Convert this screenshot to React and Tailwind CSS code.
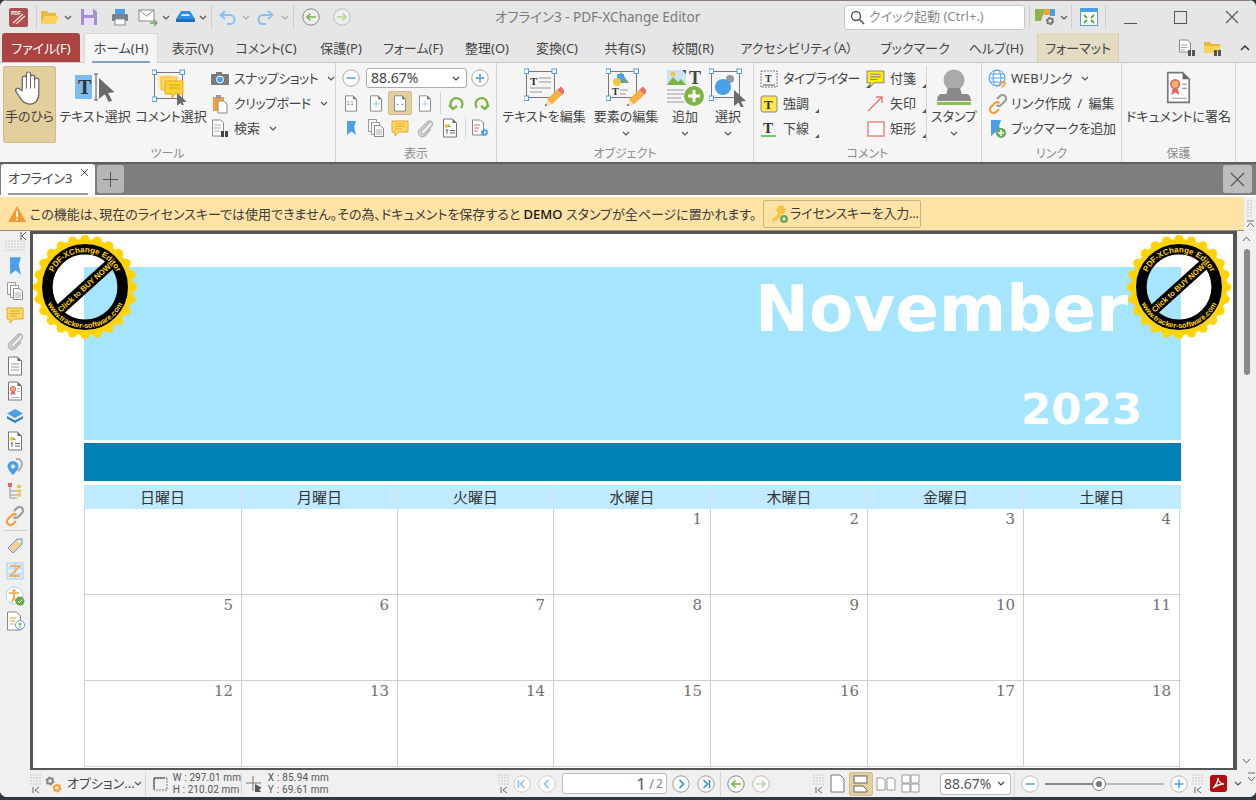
import React from "react";

const Svg = ({ w = 18, h = 18, vb, children, className = "" }) => (
  <svg width={w} height={h} viewBox={vb || `0 0 ${w} ${h}`} className={"shrink-0 " + className} fill="none">{children}</svg>
);
const Chev = ({ c = "#555", className = "" }) => (
  <Svg w={8} h={5} className={className}><path d="M1 1l3 3 3-3" stroke={c} strokeWidth="1.2" /></Svg>
);
const Corner = () => <Svg w={4} h={4} className="self-end mb-[3px] ml-[1px]"><path d="M4 0v4H0z" fill="#555" /></Svg>;
const Doc = ({ w = 16, h = 20, children }) => (
  <Svg w={w} h={h} vb="0 0 16 20">
    <path d="M1.5 1h9l4 4v14h-13z" fill="#fff" stroke="#777" />
    <path d="M10.5 1v4h4z" fill="#666" />
    {children}
  </Svg>
);
const Lines = ({ x = 4, y = 8, n = 3, w = 8, c = "#999" }) => (
  <>{Array.from({ length: n }).map((_, i) => <path key={i} d={`M${x} ${y + i * 3}h${w}`} stroke={c} />)}</>
);
const Circle = ({ c = "#4a9fe8", kind = "plus", ring = "#a8a8a8", fill = "#fff" }) => (
  <Svg w={18} h={18} vb="0 0 18 18">
    <circle cx="9" cy="9" r="8.2" fill={fill} stroke={ring} />
    {kind === "plus" && <path d="M4.5 9h9M9 4.5v9" stroke={c} strokeWidth="1.5" />}
    {kind === "minus" && <path d="M4.5 9h9" stroke={c} strokeWidth="1.5" />}
    {kind === "left" && <path d="M10.5 5l-4 4 4 4" stroke={c} strokeWidth="1.6" />}
    {kind === "right" && <path d="M7.5 5l4 4-4 4" stroke={c} strokeWidth="1.6" />}
    {kind === "first" && <path d="M11.5 5l-4 4 4 4M5.5 5v8" stroke={c} strokeWidth="1.6" />}
    {kind === "last" && <path d="M6.5 5l4 4-4 4M12.5 5v8" stroke={c} strokeWidth="1.6" />}
    {kind === "back" && <path d="M14 9H5M8.5 5.5L5 9l3.5 3.5" stroke={c} strokeWidth="1.6" />}
    {kind === "fwd" && <path d="M4 9h9M9.5 5.5L13 9l-3.5 3.5" stroke={c} strokeWidth="1.6" />}
  </Svg>
);
const Grip = ({ arrow = true }) => (
  <div className="flex flex-col items-center w-[12px] shrink-0">
    <Svg w={12} h={12}>
      {Array.from({ length: 16 }).map((_, i) => (
        <rect key={i} x={(i % 4) * 3} y={Math.floor(i / 4) * 3} width="2" height="2" fill="#dcdcdc" />
      ))}
    </Svg>
    {arrow && <Svg w={8} h={8}><path d="M1 1v6M7 1L3 4l4 3" stroke="#666" /></Svg>}
  </div>
);
const DotGrid = ({ cols, rows }) => (
  <Svg w={cols * 3} h={rows * 3}>
    {Array.from({ length: cols * rows }).map((_, i) => (
      <rect key={i} x={(i % cols) * 3} y={Math.floor(i / cols) * 3} width="2" height="2" fill="#dcdcdc" />
    ))}
  </Svg>
);
const Bookmark = ({ w = 12, h = 18 }) => (
  <Svg w={w} h={h} vb="0 0 12 18"><path d="M1 1h10l-2 7 2 9-5-4-5 4z" fill="#4a9fe8" /></Svg>
);
const Pages = () => (
  <Svg w={18} h={20}>
    <path d="M1.5 1.5h8v12h-8z" fill="#fff" stroke="#999" /><path d="M4.5 4.5h8v12h-8z" fill="#fff" stroke="#999" />
    <path d="M7.5 7.5h6l3 3v8h-9z" fill="#fff" stroke="#888" /><path d="M9 12h6M9 14h6M9 16h6" stroke="#aaa" />
  </Svg>
);
const Note = ({ c = "#ffd966", s = "#e0a92e", w = 18, h = 17 }) => (
  <Svg w={w} h={h} vb="0 0 18 17">
    <path d="M1 1h16v11H8l-4 4v-4H1z" fill={c} stroke={s} />
    <path d="M4 4h10M4 6.5h10M4 9h7" stroke={s} />
  </Svg>
);
const Clip = () => (
  <Svg w={18} h={20}><path d="M14 4L5.5 13c-2 2.2 1 4.5 3 2.5l7-7.5c3-3.2-1.5-6.5-4-4L3.5 12c-3.5 4 2 9 6 5l5.5-6" stroke="#b5b5b5" strokeWidth="1.5" /></Svg>
);
const DocImg = () => (
  <Doc><path d="M4 9l2.5-3L9 9z" fill="#7cb342" /><circle cx="4.5" cy="8" r="2" fill="#f6c343" /><path d="M3.5 12h3M5 12v4M8 12.5h5M8 15h5" stroke="#666" /></Doc>
);
const Cert = ({ big }) => (
  <Doc w={big ? 27 : 16} h={big ? 33 : 20}>
    <circle cx="6" cy="8" r="2.6" fill="#f6b26b" stroke="#e06666" />
    <path d="M4.5 10.5l-1 4 2.5-1.5 2.5 1.5-1-4" fill="#e06666" />
    <path d="M10 8h3M10 10.5h3M4 16.5h9" stroke="#999" strokeWidth=".7" />
  </Doc>
);
const LinkIcon = ({ w = 20, h = 20, a = "#f5a033", b = "#9a9a9a" }) => (
  <Svg w={w} h={h} vb="0 0 20 20">
    <path d="M9 5l3-3a3.5 3.5 0 015 5l-4 4a3.5 3.5 0 01-4.5 0" stroke={b} strokeWidth="2.2" />
    <path d="M11 15l-3 3a3.5 3.5 0 01-5-5l4-4a3.5 3.5 0 014.5 0" stroke={a} strokeWidth="2.2" />
  </Svg>
);
const Arrow = ({ x = 0, y = 0, s = 1 }) => (
  <path transform={`translate(${x} ${y}) scale(${s})`} d="M0 0l12 11-5 .5 3 6-2.5 1-3-6L0 16z" fill="#6a6a6a" />
);
const Pencil = ({ x, y }) => (
  <g transform={`translate(${x} ${y}) rotate(47)`}>
    <rect x="-3.5" y="-25" width="7" height="5" fill="#e57368" />
    <rect x="-3.5" y="-20" width="7" height="14" fill="#f6b042" />
    <path d="M-3.5 -6h7L0 0z" fill="#f4dfb8" />
    <path d="M-1.2 -2h2.400L0 0z" fill="#444" />
  </g>
);
const Handle = ({ x, y }) => <rect x={x - 2} y={y - 2} width="4.5" height="4.5" fill="#fff" stroke="#4a9fe8" />;

const cog = (cx, cy, r, c) => (
  <g>
    <circle cx={cx} cy={cy} r={r} fill="none" stroke={c} strokeWidth={r * 0.7} />
    <circle cx={cx} cy={cy} r={r * 1.35} fill="none" stroke={c} strokeWidth={r * 0.5} strokeDasharray={`${r * 0.7} ${r * 0.7}`} />
  </g>
);

const Large = ({ icon, label, chev, w, h = "h-[42px]" }) => (
  <div className={`flex flex-col items-center shrink-0 ${w}`}>
    <div className={`flex items-center justify-center ${h}`}>{icon}</div>
    <div className="leading-[18px] whitespace-nowrap -mt-[1px]">{label}</div>
    {chev && <Chev className="mt-[6px]" />}
  </div>
);
const Row = ({ icon, label, chev, corner, gap = "gap-[5px]", iw = "w-[19px]", track = "" }) => (
  <div className={`flex items-center h-[25px] whitespace-nowrap ${gap}`}>
    <div className={`flex justify-center shrink-0 ${iw}`}>{icon}</div>
    <span className={track}>{label}</span>
    {chev && <Chev className="ml-[4px]" />}
    {corner && <Corner />}
  </div>
);
const Group = ({ w, label, children }) => (
  <div className={`flex flex-col shrink-0 h-full border-r border-[#d4d4d4] ${w}`}>
    <div className="h-[79px] flex">{children}</div>
    <div className="h-[20px] leading-[24px] text-center text-[12px] text-[#8c8c8c]">{label}</div>
  </div>
);

const teeth = Array.from({ length: 24 }).map((_, i) => {
  const a = (i / 24) * Math.PI * 2;
  return [52 + Math.cos(a) * 47.5, 52 + Math.sin(a) * 47.5];
});
const Stamp = ({ id, className }) => (
  <svg width="104" height="104" viewBox="0 0 104 104" className={"absolute " + className} fill="none">
    <defs>
      <path id={id + "t"} d="M24.500 74A35 35 0 1 1 79.500 74" />
      <path id={id + "b"} d="M12 42A41.200 41.200 0 1 0 92 42" />
    </defs>
    {teeth.map(([x, y], i) => <circle key={i} cx={x} cy={y} r="4.600" fill="#ffd400" />)}
    <circle cx="52" cy="52" r="45.500" stroke="#ffd400" strokeWidth="5" />
    <circle cx="52" cy="52" r="37.700" stroke="#000" strokeWidth="10.600" />
    <g transform="rotate(-42 52 52)">
      <rect x="19" y="46.500" width="66" height="11" fill="#000" />
      <text x="52" y="54.800" textAnchor="middle" fontSize="7.800" fontWeight="700" fill="#ffd400" fontFamily="'Liberation Sans',sans-serif">Click to BUY NOW!</text>
    </g>
    <text fontSize="8" fontWeight="700" fill="#ffd400" fontFamily="'Liberation Sans',sans-serif">
      <textPath href={"#" + id + "t"} startOffset="50%" textAnchor="middle">PDF-XChange Editor</textPath>
    </text>
    <text fontSize="7.400" fontWeight="700" fill="#ffd400" fontFamily="'Liberation Sans',sans-serif">
      <textPath href={"#" + id + "b"} startOffset="50%" textAnchor="middle">www.tracker-software.com</textPath>
    </text>
  </svg>
);

const cols = [
  "border-l border-[#cfcfcf]", "border-l border-[#cfcfcf]", "border-l border-[#cfcfcf]", "border-l border-[#cfcfcf]",
  "border-l border-[#cfcfcf]", "border-l border-[#cfcfcf]", "border-l border-r border-[#cfcfcf]",
];
const days = ["日曜日", "月曜日", "火曜日", "水曜日", "木曜日", "金曜日", "土曜日"];
const weeks = [
  ["", "", "", "1", "2", "3", "4"],
  ["5", "6", "7", "8", "9", "10", "11"],
  ["12", "13", "14", "15", "16", "17", "18"],
];

const sideIcons = [
  <Bookmark key="a" w={13} h={20} />, <Pages key="b" />,
  <Note key="c" />, <Clip key="d" />,
  <Doc key="e"><Lines /></Doc>, <Cert key="f" />,
  <Svg key="g" w={18} h={16}><path d="M9 1l8 4.500-8 4.500-8-4.500z" fill="#4a9fe8" /><path d="M1 8l8 4.500L17 8v2.500L9 15l-8-4.500z" fill="#2f7fc8" /></Svg>,
  <DocImg key="h" />,
  <Svg key="i" w={18} h={20}><path d="M10 3a5 5 0 016 5c0 3-3 6-4 7" stroke="#aaa" strokeWidth="2" /><path d="M7 5a5.500 5.500 0 015.500 5.500C12.500 14 7 19 7 19s-5.500-5-5.500-8.500A5.500 5.500 0 017 5z" fill="#4a9fe8" /><circle cx="7" cy="10.500" r="2" fill="#fff" /></Svg>,
  <Svg key="j" w={16} h={18}><rect x="1" y="1" width="4" height="4" fill="#e06666" /><path d="M3 5v11h7M3 9h7M3 13h7" stroke="#999" /><rect x="10" y="3" width="4" height="3" fill="#f6c343" /><rect x="10" y="7.500" width="4" height="3" fill="#f6c343" /><rect x="10" y="11.500" width="4" height="3" fill="#f6c343" /></Svg>,
  <LinkIcon key="k" />,
];
const sideIcons2 = [
  <Svg key="a" w={18} h={18}><path d="M2 11L11 2h5v5l-9 9z" fill="#f6cf8f" stroke="#4a9fe8" /><circle cx="13.500" cy="4.500" r="1.200" fill="#fff" /></Svg>,
  <Svg key="b" w={18} h={18}><rect x="1" y="1" width="16" height="16" fill="#ddeefc" stroke="#a8d0f0" /><path d="M1 6h16M1 12h16M9 1v16" stroke="#a8d0f0" /><path d="M4 4h10L4 14h10" stroke="#f5a033" strokeWidth="1.400" /></Svg>,
  <Svg key="c" w={20} h={20}><circle cx="9.500" cy="9.500" r="8.500" fill="#fff" stroke="#a8cff0" /><circle cx="9" cy="4.500" r="1.600" fill="#f5a033" /><path d="M4 7h10M9 7v4l-2 5M9 11l2 5" stroke="#f5a033" strokeWidth="1.500" /><circle cx="15" cy="15" r="4.500" fill="#6aa84f" /><path d="M12.800 15l1.600 1.600 2.800-2.800" stroke="#fff" /></Svg>,
  <Svg key="d" w={19} h={20}><path d="M1.500 1h9l4 4v14h-13z" fill="#fff" stroke="#888" /><path d="M4 7h6M4 10h5M4 13h4" stroke="#f5a033" /><circle cx="14" cy="14" r="4.500" fill="#fff" stroke="#4a9fe8" /><path d="M14 11.500v5M12 13h4" stroke="#6aa84f" /></Svg>,
];

export default function App() {
  return (
    <div className="w-[1256px] h-[800px] overflow-hidden bg-[#2f3a40] text-[13px] text-[#444] [font-family:'Noto_Sans','Noto_Sans_CJK_JP',sans-serif] [font-feature-settings:'palt']">
      <div className="w-full h-[797px] flex flex-col bg-[#f0f0f0] rounded-t-[7px] rounded-b-[7px] overflow-hidden">
        {/* title bar */}
        <div className="h-[33px] shrink-0 bg-[#e6e6e6] flex items-center pl-[9px] pr-[17px] border-t border-[#8a7a7e]">
          <Svg w={19} h={19} className="rounded-[2px]">
            <rect width="19" height="19" fill="#a9504e" />
            <path d="M4 15L14 6M7 16l9-8" stroke="#f4d5d0" strokeWidth="1.300" />
            <text x="2" y="7" fontSize="5" fontWeight="700" fill="#fff" fontFamily="'Liberation Sans',sans-serif">PDF</text>
          </Svg>
          <div className="w-px h-[24px] bg-[#cfcfcf] ml-[8px]" />
          <Svg w={19} h={16} className="ml-[3px]"><path d="M1 2h6l2 2h7v3H5L1 15z" fill="#e8b93a" /><path d="M4 7h15l-3 8H1z" fill="#fbd35c" /></Svg>
          <Chev className="ml-[5px]" />
          <Svg w={18} h={18} className="ml-[8px]"><path d="M1 1h13l3 3v13H1z" fill="#a68fd0" /><rect x="4" y="1" width="9" height="6" fill="#e7defa" /><rect x="4" y="10" width="10" height="7" fill="#e7defa" /></Svg>
          <Svg w={18} h={18} className="ml-[13px]"><rect x="4" y="1" width="10" height="5" fill="#4a9fe8" /><rect x="1" y="6" width="16" height="7" rx="1" fill="#7a8088" /><rect x="4" y="11" width="10" height="6" fill="#fff" stroke="#888" /></Svg>
          <Svg w={20} h={18} className="ml-[9px]"><rect x="1" y="2" width="15" height="11" fill="#fff" stroke="#888" /><path d="M1 2l7.500 6L16 2" stroke="#888" /><path d="M12 15h7M16 12l3 3-3 3" stroke="#6aa84f" strokeWidth="1.300" /></Svg>
          <Chev className="ml-[4px]" />
          <Svg w={21} h={14} className="ml-[5px]"><path d="M6 1h9l5 8H1z" fill="#2f8fe0" /><path d="M1 9h19v3H1z" fill="#1f6fb5" /><path d="M7 4h7l1 2H6z" fill="#cfe6fa" /></Svg>
          <Chev className="ml-[3px]" />
          <div className="w-px h-[24px] bg-[#cfcfcf] ml-[4px]" />
          <Svg w={17} h={15} className="ml-[7px]"><path d="M6 1L1.500 5 6 9M2 5h9a4.500 4.500 0 010 9H8" stroke="#8cc0f0" strokeWidth="2" /></Svg>
          <Chev c="#aaa" className="ml-[6px]" />
          <Svg w={17} h={15} className="ml-[7px]"><path d="M11 1l4.500 4L11 9M15 5H6a4.500 4.500 0 000 9h3" stroke="#8cc0f0" strokeWidth="2" /></Svg>
          <Chev c="#aaa" className="ml-[7px]" />
          <div className="w-px h-[24px] bg-[#cfcfcf] ml-[4px]" />
          <div className="ml-[8px]"><Circle kind="back" c="#7cb342" ring="#888" fill="#eee" /></div>
          <div className="ml-[13px]"><Circle kind="fwd" c="#b5d99a" ring="#bbb" fill="#eee" /></div>
          <div className="flex-1 text-center text-[13.500px] text-[#7a7a7a] whitespace-nowrap">オフライン3 - PDF-XChange Editor</div>
          <div className="w-[181px] h-[25px] bg-white border border-[#c8c8c8] rounded-[3px] flex items-center pl-[5px] gap-[4px] text-[#8a8a8a]">
            <Svg w={15} h={15}><circle cx="6" cy="6" r="4.500" stroke="#555" strokeWidth="1.400" /><path d="M9.500 9.500L14 14" stroke="#555" strokeWidth="1.600" /></Svg>
            <span className="whitespace-nowrap">クイック起動 (Ctrl+.)</span>
          </div>
          <div className="w-px h-[24px] bg-[#cfcfcf] ml-[4px]" />
          <Svg w={24} h={20} className="ml-[4px]"><path d="M1 2h10L7 14H1z" fill="#8bb54a" /><path d="M11 2h5v6l-7 0z" fill="#f5a033" /><path d="M16 2h5v7h-5z" fill="#4a9fe8" />{cog(16, 14, 2.600, "#777")}</Svg>
          <Chev className="ml-[2px]" />
          <div className="w-px h-[24px] bg-[#cfcfcf] ml-[3px]" />
          <Svg w={18} h={18} className="ml-[8px]"><rect x="0.500" y="0.500" width="17" height="17" fill="#fff" stroke="#4a9fe8" /><rect x="1" y="1" width="16" height="3" fill="#4a9fe8" /><path d="M4 7l3 3M14 7l-3 3M4 15l3-3M14 15l-3-3" stroke="#5aaa3a" strokeWidth="1.800" /></Svg>
          <div className="w-px h-[24px] bg-[#cfcfcf] ml-[7px]" />
          <div className="ml-[18px] w-[14px] h-[14px] flex items-end"><div className="w-[13px] h-px bg-[#555]" /></div>
          <div className="ml-[36px] w-[13px] h-[13px] border border-[#555]" />
          <Svg w={14} h={14} className="ml-[38px]"><path d="M1 1l12 12M13 1L1 13" stroke="#555" strokeWidth="1.100" /></Svg>
        </div>
        {/* ribbon tabs */}
        <div className="h-[30px] shrink-0 bg-[#e6e6e6] flex items-end pl-[2px] border-b border-[#c9c9c9] whitespace-nowrap">
          <div className="w-[78px] h-[29px] bg-[#a94442] rounded-t-[3px] text-[#fff] text-center leading-[31px]">ファイル(F)</div>
          <div className="ml-[4px] w-[74px] h-[30px] bg-[#f5f5f5] rounded-t-[3px] flex flex-col items-center border-x border-t border-[#d8d8d8] -mb-px">
            <div className="leading-[29px] h-[27px]">ホーム(H)</div>
            <div className="w-[58px] h-[2px] bg-[#86a3bf]" />
          </div>
          <div className="w-[69px] h-[29px] text-center leading-[31px]">表示(V)</div>
          <div className="w-[78px] h-[29px] text-center leading-[31px]">コメント(C)</div>
          <div className="w-[72px] h-[29px] text-center leading-[31px]">保護(P)</div>
          <div className="w-[72px] h-[29px] text-center leading-[31px]">フォーム(F)</div>
          <div className="w-[76px] h-[29px] text-center leading-[31px]">整理(O)</div>
          <div className="w-[64px] h-[29px] text-center leading-[31px]">変換(C)</div>
          <div className="w-[72px] h-[29px] text-center leading-[31px]">共有(S)</div>
          <div className="w-[64px] h-[29px] text-center leading-[31px]">校閲(R)</div>
          <div className="w-[143px] h-[29px] text-center leading-[31px]">アクセシビリティ（A）</div>
          <div className="w-[94px] h-[29px] text-center leading-[31px]">ブックマーク</div>
          <div className="w-[68px] h-[29px] text-center leading-[31px]">ヘルプ(H)</div>
          <div className="ml-[7px] w-[82px] h-[29px] bg-[#e3dcc2] border-x border-[#d8cfa8] text-center leading-[31px]">フォーマット</div>
          <div className="ml-[59px] h-[29px] flex items-center">
            <Svg w={18} h={18}><path d="M1.500 1h8l3 3v9h-11z" fill="#fff" stroke="#888" /><path d="M3 6h6M3 8.500h6M3 11h4" stroke="#aaa" /><rect x="10" y="11" width="3" height="6" fill="#555" /><rect x="14" y="11" width="3" height="6" fill="#555" /></Svg>
            <Svg w={19} h={18} className="ml-[7px]"><path d="M1 3h6l2 2h8v3H1z" fill="#e8b93a" /><path d="M1 7h17l-2 7H1z" fill="#fbd35c" /><rect x="11" y="11" width="3" height="6" fill="#555" /><rect x="15" y="11" width="3" height="6" fill="#555" /></Svg>
            <Svg w={10} h={6} className="ml-[18px]"><path d="M1 5l4-4 4 4" stroke="#333" strokeWidth="1.500" /></Svg>
          </div>
        </div>
        {/* ribbon */}
        <div className="h-[99px] shrink-0 bg-[#f5f5f5] flex">
          <Group w="w-[336px]" label="ツール">
            <div className="flex pl-[3px] pt-[3px]">
              <div className="w-[53px] h-[77px] bg-[#e3cf9b] border border-[#cdbd90] rounded-[2px] flex flex-col items-center shrink-0">
                <Svg w={31} h={39} vb="0 0 30 36" className="mt-[1px]"><path d="M8 21V9a2 2 0 014 0V5a2 2 0 014 0v3a2 2 0 014 0v3a2 2 0 014 0v12c0 7-3 11-9 11-5 0-7-3-9-6l-4-6c-1.500-2.500 1.500-4.500 3.500-2.500z" fill="#fff" stroke="#666" strokeWidth="1.200" /><path d="M12 9v10M16 8v11M20 11v8" stroke="#666" /></Svg>
                <div className="leading-[18px] whitespace-nowrap">手のひら</div>
              </div>
              <Large w="w-[76px] ml-[1px]" label="テキスト選択" icon={
                <Svg w={40} h={34}><rect x="0" y="5" width="17" height="24" rx="1" fill="#7cbcf2" /><text x="3" y="24" fontSize="20" fontWeight="700" fill="#333" fontFamily="'Liberation Serif',serif">T</text><path d="M19 4h4M21 4v26M19 30h4" stroke="#555" /><Arrow x={24} y={8} s={1.300} /></Svg>
              } />
              <Large w="w-[76px]" label="コメント選択" icon={
                <Svg w={38} h={36}><rect x="2.500" y="3.500" width="28" height="26" stroke="#777" /><Handle x={2} y={3} /><Handle x={30} y={3} /><Handle x={2} y={30} /><path d="M6 6h14v12H6z" fill="#fde9a8" /><path d="M9 8h16v13H9z" fill="#fbd860" stroke="#f0b840" /><path d="M13 12h18v13h-8l-3 4v-4h-7z" fill="#fdd230" stroke="#f0a830" /><path d="M17 16h11M17 19h11" stroke="#e09a20" /><Arrow x={25} y={24} s={.8} /></Svg>
              } />
              <div className="flex flex-col ml-[2px]">
                <Row track="tracking-[-0.5px]" label="スナップショット" chev iw="w-[18px]" icon={<Svg w={18} h={15}><rect x="0" y="3" width="18" height="11" rx="1" fill="#7a7a7a" /><rect x="5" y="1" width="6" height="3" fill="#7a7a7a" /><circle cx="9" cy="8.500" r="3.500" fill="#4a9fe8" stroke="#fff" /></Svg>} />
                <Row track="tracking-[-0.5px]" label="クリップボード" chev iw="w-[18px]" icon={<Svg w={16} h={20}><rect x="1" y="3" width="11" height="14" fill="#f5a033" /><rect x="4" y="1" width="5" height="4" fill="#999" /><path d="M6 7h6l3 3v9H6z" fill="#fff" stroke="#888" /></Svg>} />
                <Row label="検索" chev iw="w-[18px]" icon={<Svg w={18} h={20}><path d="M1.500 1h8l3 3v13h-11z" fill="#fff" stroke="#888" /><path d="M3 6h7M3 9h7M3 12h5" stroke="#aaa" /><rect x="10" y="12" width="3" height="6" fill="#444" /><rect x="14" y="12" width="3" height="6" fill="#444" /></Svg>} />
              </div>
            </div>
          </Group>
          <Group w="w-[161px]" label="表示">
            <div className="flex flex-col pl-[6px] pt-[5px]">
              <div className="flex items-center h-[20px]">
                <Circle kind="minus" />
                <div className="ml-[6px] w-[101px] h-[20px] bg-white border border-[#aaa] rounded-[3px] flex items-center justify-between pl-[4px] pr-[6px] text-[14px] leading-none">
                  <span>88.67%</span><Chev c="#444" />
                </div>
                <div className="ml-[4px]"><Circle kind="plus" /></div>
              </div>
              <div className="flex items-center h-[24px] mt-[3px] -ml-[3px]">
                <div className="w-[24px] flex justify-center"><Doc w={14} h={17}><text x="3" y="12" fontSize="5.500" fill="#555" fontFamily="'Liberation Sans',sans-serif">1:1</text></Doc></div>
                <div className="w-[25px] flex justify-center"><Doc w={14} h={17}><path d="M8 7v7M4.500 10.500h7" stroke="#4a9fe8" strokeDasharray="2 1" /></Doc></div>
                <div className="w-[24px] h-[24px] flex items-center justify-center bg-[#e3cf9b] border border-[#cdbd90] rounded-[2px]"><Doc w={14} h={17}><path d="M4 11h2M10 11h2" stroke="#4a9fe8" strokeWidth="1.500" /></Doc></div>
                <div className="w-[25px] flex justify-center"><Doc w={14} h={17}><path d="M8 7v7M4.500 10.500h7" stroke="#4a9fe8" strokeDasharray="1 1" /></Doc></div>
                <div className="w-px h-[22px] bg-[#d4d4d4] ml-[3px]" />
                <Svg w={17} h={16} className="ml-[7px]"><path d="M5 14A6 6 0 1113 13M1 10l4 4 4-3" stroke="#7cb342" strokeWidth="2.200" /></Svg>
                <Svg w={17} h={16} className="ml-[8px]"><path d="M12 14A6 6 0 104 13M16 10l-4 4-4-3" stroke="#7cb342" strokeWidth="2.200" /></Svg>
              </div>
              <div className="flex items-center h-[24px] mt-[1px] -ml-[3px]">
                <div className="w-[24px] flex justify-center"><Bookmark w={11} h={16} /></div>
                <div className="w-[25px] flex justify-center"><Pages /></div>
                <div className="w-[24px] flex justify-center"><Note /></div>
                <div className="w-[25px] flex justify-center"><Clip /></div>
                <div className="w-[25px] flex justify-center"><DocImg /></div>
                <div className="w-px h-[22px] bg-[#d4d4d4] ml-[3px]" />
                <Svg w={19} h={19} className="ml-[5px]"><path d="M1.500 1h8l3 3v12h-11z" fill="#fff" stroke="#888" /><path d="M3 6h6M3 9h5M3 12h4" stroke="#e06666" />{cog(13.500, 13.500, 2.300, "#4a9fe8")}</Svg>
              </div>
            </div>
          </Group>
          <Group w="w-[257px]" label="オブジェクト">
            <div className="flex pl-[5px] pt-[3px]">
              <Large w="w-[84px]" chev={false} label="テキストを編集" icon={
                <Svg w={40} h={40}><rect x="2.500" y="4.500" width="28" height="26" stroke="#777" /><Handle x={2} y={4} /><Handle x={30} y={4} /><Handle x={2} y={31} /><text x="6" y="18" fontSize="11" fontWeight="700" fill="#333" fontFamily="'Liberation Serif',serif">T</text><path d="M15 11h12M15 15h12M6 21h21M6 25h12" stroke="#999" /><Pencil x={21} y={39} /></Svg>
              } />
              <Large w="w-[80px]" chev label="要素の編集" icon={
                <Svg w={40} h={40}><rect x="2.500" y="4.500" width="28" height="26" stroke="#777" /><Handle x={2} y={4} /><Handle x={30} y={4} /><Handle x={2} y={31} /><path d="M15 5l8 11h-14z" fill="#6aa084" /><rect x="11" y="7" width="7" height="7" fill="#4a9fe8" /><circle cx="11" cy="15" r="4" fill="#f6c343" /><text x="6" y="28" fontSize="10" fontWeight="700" fill="#333" fontFamily="'Liberation Serif',serif">T</text><path d="M14 23h8M14 27h6" stroke="#999" /><Pencil x={21} y={39} /></Svg>
              } />
              <Large w="w-[38px]" chev label="追加" icon={
                <Svg w={38} h={40}><path d="M1 3h19v15H1z" fill="#c7e3f6" /><path d="M1 18l6-8 5 5 3-3 5 6z" fill="#7cb342" /><circle cx="7" cy="7" r="2.500" fill="#f6c343" /><path d="M16 3l4 4V3z" fill="#555" /><text x="23" y="17" fontSize="18" fontWeight="700" fill="#444" fontFamily="'Liberation Serif',serif">T</text><path d="M1 23h17M1 27h17M1 31h14M1 35h17" stroke="#999" /><circle cx="28" cy="29" r="10" fill="#7cb342" /><path d="M22 29h12M28 23v12" stroke="#fff" strokeWidth="3" /></Svg>
              } />
              <Large w="w-[48px]" chev label="選択" icon={
                <Svg w={38} h={40}><rect x="2.500" y="4.500" width="28" height="26" stroke="#777" /><Handle x={2} y={4} /><Handle x={30} y={4} /><Handle x={2} y={31} /><circle cx="21" cy="12" r="4" fill="#999" /><circle cx="14" cy="20" r="8" fill="#4a9fe8" /><Arrow x={25} y={23} s={1} /></Svg>
              } />
            </div>
          </Group>
          <Group w="w-[228px]" label="コメント">
            <div className="flex pl-[6px] pt-[3px]">
              <div className="w-[106px] flex flex-col">
                <Row corner track="tracking-[-0.6px]" label="タイプライター" iw="w-[18px]" icon={<Svg w={18} h={18}><rect x="1" y="1" width="16" height="16" stroke="#777" strokeDasharray="2 1" /><text x="5" y="12" fontSize="10" fontWeight="700" fill="#333" fontFamily="'Liberation Serif',serif">T</text><path d="M3 15h12" stroke="#555" /></Svg>} />
                <Row corner label="強調" iw="w-[18px]" icon={<Svg w={18} h={18}><rect x="1" y="1" width="16" height="16" rx="2" fill="#ffe94a" stroke="#888" /><text x="4" y="14" fontSize="13" fontWeight="700" fill="#333" fontFamily="'Liberation Serif',serif">T</text></Svg>} />
                <Row corner label="下線" iw="w-[18px]" icon={<Svg w={18} h={18}><text x="3" y="13" fontSize="15" fontWeight="700" fill="#333" fontFamily="'Liberation Serif',serif">T</text><path d="M1 16h15" stroke="#3fbf3f" strokeWidth="1.500" /></Svg>} />
              </div>
              <div className="w-[60px] flex flex-col">
                <Row corner label="付箋" iw="w-[19px]" icon={<Note c="#ffee00" s="#888" w={19} h={18} />} />
                <Row corner label="矢印" iw="w-[19px]" icon={<Svg w={17} h={17}><path d="M1 16L15 2M9 2h6v6" stroke="#e57368" strokeWidth="1.300" /></Svg>} />
                <Row corner label="矩形" iw="w-[19px]" icon={<Svg w={18} h={16}><rect x="1" y="1" width="16" height="14" fill="#fff" stroke="#e57368" strokeWidth="1.300" /></Svg>} />
              </div>
              <div className="w-px h-[76px] bg-[#d4d4d4]" />
              <Large w="w-[54px]" chev label="スタンプ" icon={
                <Svg w={36} h={38}><circle cx="18" cy="12" r="10.500" fill="#aaa" /><path d="M12 20h12l2 7H10z" fill="#888" /><path d="M1 33a4 7 0 014-7h26a4 7 0 014 7z" fill="#8a8a8a" /><rect x="1" y="34" width="34" height="3" fill="#8bc34a" /></Svg>
              } />
            </div>
          </Group>
          <Group w="w-[140px]" label="リンク">
            <div className="flex flex-col pl-[6px] pt-[3px]">
              <Row chev gap="gap-[4px]" label="WEBリンク" icon={<Svg w={19} h={19}><circle cx="9" cy="9" r="8" stroke="#4a9fe8" fill="#fff" /><ellipse cx="9" cy="9" rx="4" ry="8" stroke="#4a9fe8" /><path d="M1 9h16M2 5h14M2 13h14" stroke="#4a9fe8" /><path d="M11 16l3-3a2 2 0 012.800 2.800l-3 2.500" stroke="#f5a033" strokeWidth="1.500" /></Svg>} />
              <Row gap="gap-[4px]" track="[word-spacing:3px]" label="リンク作成 / 編集" icon={<LinkIcon />} />
              <Row gap="gap-[4px]" track="tracking-[-0.3px]" label="ブックマークを追加" icon={<Svg w={18} h={20}><path d="M2 1h10l-2 6 2 6-5 0-5 4z" fill="#4a9fe8" /><circle cx="12" cy="14" r="5" fill="#6aa84f" /><path d="M9 14h6M12 11v6" stroke="#fff" strokeWidth="1.600" /></Svg>} />
            </div>
          </Group>
          <Group w="w-[114px]" label="保護">
            <Large w="w-[113px] pt-[3px]" label="ドキュメントに署名" icon={<Cert big />} />
          </Group>
          <div className="flex-1" />
        </div>
        {/* document tabs */}
        <div className="h-[33px] shrink-0 bg-[#7e7e7e] border-t-2 border-[#5e5e5e] flex items-end pl-[1px] whitespace-nowrap">
          <div className="w-[94px] h-[31px] bg-white rounded-t-[3px] relative flex flex-col pl-[7px]">
            <div className="leading-[28px] h-[29px]">オフライン3</div>
            <div className="w-[80px] h-[2px] bg-[#999]" />
            <Svg w={9} h={9} className="absolute right-[6px] top-[4px]"><path d="M1 1l7 7M8 1L1 8" stroke="#555" /></Svg>
          </div>
          <div className="ml-[2px] mb-[2px] w-[27px] h-[28px] bg-[#b6b6b6] rounded-[3px] flex items-center justify-center">
            <Svg w={15} h={15}><path d="M7.500 0v15M0 7.500h15" stroke="#555" /></Svg>
          </div>
          <div className="flex-1" />
          <div className="mr-[4px] mb-[2px] w-[29px] h-[28px] bg-[#bdbdbd] rounded-[3px] flex items-center justify-center">
            <Svg w={15} h={15}><path d="M1 1l13 13M14 1L1 14" stroke="#555" strokeWidth="1.100" /></Svg>
          </div>
        </div>
        <div className="h-[2px] shrink-0 bg-white" />
        {/* notice */}
        <div className="h-[34px] shrink-0 flex bg-[#f0f0f0]">
          <div className="w-[1244px] bg-[#ffe2a6] border-b border-[#8f8f8f] flex items-center pl-[8px] text-[#3a3a3a] whitespace-nowrap">
            <Svg w={18} h={16}><path d="M9 0l9 16H0z" fill="#f79a2e" /><path d="M9 5v6M9 12.500v2" stroke="#fff" strokeWidth="1.800" /></Svg>
            <span className="ml-[4px] w-[733px] shrink-0 leading-[20px] mt-[1px]">この機能は、現在のライセンスキーでは使用できません。その為、ドキュメントを保存すると <span className="text-[#111] font-medium">DEMO</span> スタンプが全ページに置かれます。</span>
            <div className="h-[28px] w-[158px] border border-[#c8b184] rounded-[2px] flex items-center pl-[5px] gap-[1px] mt-[1px] tracking-[-0.2px]">
              <Svg w={20} h={20}><circle cx="12" cy="6" r="4.500" fill="#f6c343" /><path d="M10 9L3 16l2 2 2-2 1 1 4-6" fill="#f6c343" /><circle cx="15" cy="15" r="4" fill="#6aa84f" /><path d="M13 15h4M15 13v4" stroke="#fff" /></Svg>
              <span>ライセンスキーを入力...</span>
            </div>
          </div>
          <div className="flex-1 flex flex-col items-center pt-[3px] gap-[1px]">
            <DotGrid cols={2} rows={6} />
            <Svg w={9} h={8} className="mt-[1px]"><path d="M1 1h7M1 7l3.500-4L8 7" stroke="#666" /></Svg>
          </div>
        </div>
        {/* viewer */}
        <div className="h-[539px] shrink-0 flex">
          <div className="w-[30px] shrink-0 bg-[#f0f0f0] flex flex-col items-center relative pt-[9px]">
            <div className="h-[13px] flex"><DotGrid cols={7} rows={4} /></div>
            <Svg w={7} h={8} className="absolute right-[3px] top-[1px]"><path d="M1 0v8M6 0L2 4l4 4" stroke="#666" /></Svg>
            {sideIcons.map((ic, i) => <div key={i} className="h-[25px] w-full flex items-center justify-center shrink-0">{ic}</div>)}
            <div className="w-[24px] h-px bg-[#cfcfcf] my-[2px]" />
            {sideIcons2.map((ic, i) => <div key={i} className="h-[25px] w-full flex items-center justify-center shrink-0">{ic}</div>)}
          </div>
          <div className="w-[1207px] shrink-0 border-t-[3px] border-l-[3px] border-r-[4px] border-b-[2px] border-[#555] bg-white relative overflow-hidden">
            <div className="ml-[51px] w-[1097px] mt-[33px]">
              <div className="h-[173px] bg-[#a5e5ff] flex flex-col items-end text-white font-bold [font-family:'DejaVu_Sans',sans-serif]">
                <div className="text-[64.500px] leading-[64px] mt-[10px] mr-[53px]">November</div>
                <div className="text-[43.500px] leading-[44px] mt-[46px] mr-[39px]">2023</div>
              </div>
              <div className="h-[38px] mt-[3px] bg-[#0080b4]" />
              <div className="mt-[4px] grid grid-cols-[157px_156px_156px_157px_157px_156px_157px] h-[24px] bg-[#bfeaff] text-[15px] text-[#333] leading-[23px] text-center [font-family:'Noto_Sans_CJK_JP',sans-serif] [font-feature-settings:normal]">
                {days.map((d, i) => <div key={d} className={i ? "border-l border-[#e2e2e2]" : ""}>{d}</div>)}
              </div>
              {weeks.map((w, wi) => (
                <div key={wi} className="grid grid-cols-[157px_156px_156px_157px_157px_156px_157px] h-[86px] border-b border-[#cfcfcf]">
                  {w.map((d, i) => (
                    <div key={i} className={`${cols[i]} text-right pr-[8px] text-[15px] leading-[20px] text-[#707070] [font-family:'DejaVu_Serif',serif]`}>{d}</div>
                  ))}
                </div>
              ))}
            </div>
            <Stamp id="s1" className="left-0 top-[1px]" />
            <Stamp id="s2" className="left-[1094px] top-[1px]" />
          </div>
          <div className="flex-1 flex flex-col items-center bg-[#f0f0f0] pt-[5px] pb-[6px]">
            <Svg w={9} h={6}><path d="M1 5l3.500-4L8 5" stroke="#666" /></Svg>
            <div className="w-[6px] h-[126px] bg-[#8a8a8a] rounded-full mt-[7px] ml-[1px]" />
            <div className="flex-1" />
            <Svg w={9} h={6}><path d="M1 1l3.500 4L8 1" stroke="#666" /></Svg>
          </div>
        </div>
        {/* status bar */}
        <div className="h-[27px] shrink-0 bg-[#f0f0f0] flex items-center pl-[30px] whitespace-nowrap">
          <Grip />
          <Svg w={18} h={18} className="ml-[2px]">{cog(6, 6, 2.800, "#888")}{cog(13, 13, 2.800, "#f5a033")}</Svg>
          <span className="ml-[5px] w-[62px] text-[13px]">オプション...</span>
          <Chev className="ml-[5px]" />
          <div className="w-px h-[24px] bg-[#d4d4d4] ml-[3px]" />
          <Svg w={17} h={17} className="ml-[6px]"><path d="M2 15V3h13M15 3v12H2" stroke="#777" strokeDasharray="2 1" /><path d="M2 3h11M2 3v11" stroke="#444" /></Svg>
          <div className="ml-[4px] w-[69px] text-[10px] leading-[12px] text-[#555] [font-family:'Roboto',sans-serif] tracking-[0.1px]"><div>W : 297.01 mm</div><div>H : 210.02 mm</div></div>
          <div className="w-px h-[22px] bg-[#d4d4d4]" />
          <Svg w={18} h={18} className="ml-[4px]"><path d="M7 1v15M0 8h15" stroke="#777" /><path d="M9 9l7 4-3 1 2 3H9z" fill="#555" /></Svg>
          <div className="ml-[4px] w-[62px] text-[10px] leading-[12px] text-[#555] [font-family:'Roboto',sans-serif] tracking-[0.2px]"><div>X : 85.94 mm</div><div>Y : 69.61 mm</div></div>
          <div className="ml-[169px] flex items-center">
            <Grip />
            <div className="ml-[3px]"><Circle kind="first" c="#8cc0f0" ring="#ccc" /></div>
            <div className="ml-[7px]"><Circle kind="left" c="#8cc0f0" ring="#ccc" /></div>
            <div className="ml-[6px] w-[105px] h-[21px] bg-white border border-[#bbb] rounded-[3px] flex items-center justify-end pr-[3px] text-[#555] leading-none"><span className="text-[17px]">1</span><span className="text-[#888] text-[14px] ml-[3px]">/</span><span className="text-[#888] text-[12px] ml-[2px]">2</span></div>
            <div className="ml-[5px]"><Circle kind="right" c="#2f8fe0" ring="#999" /></div>
            <div className="ml-[7px]"><Circle kind="last" c="#2f8fe0" ring="#999" /></div>
            <div className="w-px h-[24px] bg-[#d4d4d4] ml-[5px]" />
            <div className="ml-[6px]"><Circle kind="back" c="#7cb342" ring="#888" /></div>
            <div className="ml-[7px]"><Circle kind="fwd" c="#b5d99a" ring="#bbb" /></div>
          </div>
          <div className="ml-[43px] flex items-center">
            <Grip />
            <Svg w={15} h={19} className="ml-[5px]"><path d="M1 1h9l4 4v13H1z" fill="#fff" stroke="#777" /></Svg>
            <div className="ml-[4px] w-[24px] h-[24px] bg-[#e3cf9b] border border-[#cdbd90] rounded-[2px] flex items-center justify-center">
              <Svg w={15} h={18}><rect x="1" y="1" width="13" height="7" fill="#fff" stroke="#666" /><path d="M1 11h9l4 4v2H1z" fill="#fff" stroke="#666" /></Svg>
            </div>
            <Svg w={20} h={16} className="ml-[3px]"><path d="M1 2h6l2 2v10H1zM11 2h6l2 2v10h-8z" fill="#fff" stroke="#999" /></Svg>
            <Svg w={19} h={19} className="ml-[5px]"><path d="M1 1h8v8H1zM10 1h8v8h-8zM1 10h8v8H1zM10 10h8v8h-8z" fill="#fff" stroke="#999" /></Svg>
            <div className="ml-[20px] w-[71px] h-[22px] bg-white border border-[#bbb] rounded-[3px] flex items-center justify-between pl-[3px] pr-[5px] text-[14px] text-[#555]"><span>88.67%</span><Chev c="#444" /></div>
            <div className="w-px h-[24px] bg-[#d4d4d4] ml-[3px]" />
            <div className="ml-[6px]"><Circle kind="minus" ring="#bbb" /></div>
            <div className="ml-[6px] w-[119px] h-[18px] flex items-center relative">
              <div className="w-[48px] h-[2px] bg-[#888]" />
              <div className="w-[14px] h-[14px] rounded-full border border-[#777] bg-white flex items-center justify-center shrink-0 -ml-[1px]"><div className="w-[6px] h-[6px] rounded-full bg-[#777]" /></div>
              <div className="flex-1 h-[2px] bg-[#bbb]" />
            </div>
            <div className="ml-[6px]"><Circle kind="plus" ring="#bbb" /></div>
            <div className="ml-[4px]"><Grip /></div>
            <Svg w={17} h={17} className="ml-[6px] rounded-[2px]"><rect width="17" height="17" rx="2" fill="#b50d0d" /><path d="M3 13c3-2 5-7 5-10 0 3 3 6 6 6-3 0-7 1-11 4z" stroke="#fff" strokeWidth="1.300" /></Svg>
            <Chev className="ml-[7px]" />
            <Svg w={9} h={12} className="ml-[5px] -mt-[12px]"><path d="M1 1h7M1 5l3.500 4L8 5" stroke="#666" /></Svg>
          </div>
        </div>
      </div>
    </div>
  );
}
